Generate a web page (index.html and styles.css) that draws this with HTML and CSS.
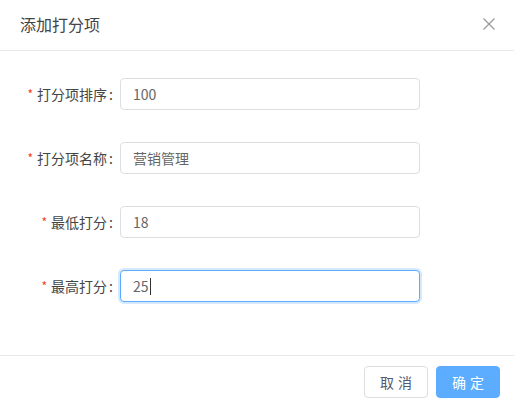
FILE: index.html
```html
<!DOCTYPE html>
<html lang="zh">
<head>
    <meta charset="UTF-8">
    <meta name="viewport" content="width=device-width, initial-scale=1.0">
    <title>添加打分项</title>
    <link rel="stylesheet" href="styles.css">
</head>
<body>
    <div class="modal">
        <div class="modal-header">
            <div class="modal-title">添加打分项</div>
            <button type="button" class="modal-close" aria-label="关闭">
                <svg width="12" height="12" viewBox="0 0 12 12">
                    <path d="M0.5 0.5 L11.5 11.5 M11.5 0.5 L0.5 11.5" stroke="#999" stroke-width="1.2" fill="none"/>
                </svg>
            </button>
        </div>

        <div class="modal-body">
            <div class="form-item">
                <label class="form-label required" for="sort">打分项排序</label>
                <input class="form-input" id="sort" type="text" value="100">
            </div>
            <div class="form-item">
                <label class="form-label required" for="name">打分项名称</label>
                <input class="form-input" id="name" type="text" value="营销管理">
            </div>
            <div class="form-item">
                <label class="form-label required" for="min">最低打分</label>
                <input class="form-input" id="min" type="text" value="18">
            </div>
            <div class="form-item">
                <label class="form-label required" for="max">最高打分</label>
                <div class="form-input focused">25<span class="caret"></span></div>
            </div>
        </div>

        <div class="modal-footer">
            <button type="button" class="btn">取消</button>
            <button type="button" class="btn btn-primary">确定</button>
        </div>
    </div>
</body>
</html>
```

FILE: styles.css
```css
* {
    box-sizing: border-box;
}
body {
    margin: 0;
    font-family: "Noto Sans CJK SC", "Liberation Sans", sans-serif;
    font-size: 14px;
    color: #444;
    background: #fff;
}
.modal {
    width: 514px;
    background: #fff;
}
.modal-header {
    height: 51px;
    display: flex;
    align-items: center;
    justify-content: space-between;
    padding: 0 20px 2px 20px;
    border-bottom: 1px solid #e8e8e8;
}
.modal-title {
    font-size: 16px;
    color: #444;
}
.modal-close {
    border: none;
    background: none;
    padding: 0;
    margin-right: -1px;
    width: 12px;
    height: 12px;
    display: flex;
    cursor: pointer;
}
.modal-body {
    padding: 27px 24px 21px 0;
}
.form-item {
    display: flex;
    align-items: center;
    height: 32px;
    margin-bottom: 32px;
}
.form-label {
    width: 120px;
    text-align: right;
    padding-right: 7px;
    color: #444;
    white-space: nowrap;
}
.form-label::after {
    content: ":";
    margin-left: 2px;
}
.form-label.required::before {
    content: "*";
    color: #ed4014;
    margin-right: 4px;
    font-size: 12px;
    vertical-align: 1px;
}
.form-input {
    width: 300px;
    height: 32px;
    padding: 0 12px;
    border: 1px solid #dcdee2;
    border-radius: 4px;
    font-family: inherit;
    font-size: 14px;
    color: #666;
    outline: none;
    background: #fff;
}
div.form-input {
    display: flex;
    align-items: center;
}
.form-input.focused {
    border-color: #5cadff;
    box-shadow: 0 0 0 2px rgba(45, 140, 240, 0.2);
}
.caret {
    display: inline-block;
    width: 1px;
    height: 17px;
    background: #333;
    margin-left: 1px;
}
.modal-footer {
    border-top: 1px solid #e8e8e8;
    padding: 10px 14px 10px 0;
    display: flex;
    justify-content: flex-end;
    gap: 8px;
}
.btn {
    width: 64px;
    height: 32px;
    border: 1px solid #dcdee2;
    border-radius: 4px;
    background: #fff;
    color: #515a6e;
    font-family: inherit;
    font-size: 14px;
    letter-spacing: 4px;
    text-indent: 4px;
    cursor: pointer;
}
.btn-primary {
    background: #5cadff;
    border-color: #5cadff;
    color: #fff;
}
```
